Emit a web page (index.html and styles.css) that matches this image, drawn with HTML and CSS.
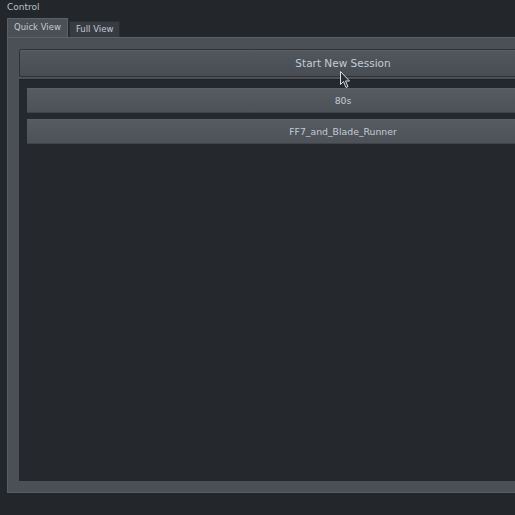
FILE: index.html
```html
<!DOCTYPE html>
<html>
<head>
<meta charset="utf-8">
<link rel="stylesheet" href="styles.css">
</head>
<body>
<div class="window">
  <div class="title">Control</div>
  <div class="tabs">
    <div class="tab active">Quick View</div>
    <div class="tab">Full View</div>
  </div>
  <div class="pane">
    <button class="start">Start New Session</button>
    <div class="list">
      <button class="item">80s</button>
      <button class="item">FF7_and_Blade_Runner</button>
    </div>
  </div>
</div>
<svg class="cursor" width="12" height="18" viewBox="0 0 12 18">
  <path d="M0.5 0.5 L0.5 13.5 L3.5 10.5 L6 16.5 L8 15.5 L5.5 10 L9.5 10 Z" fill="#2a2d31" stroke="#d8dde2" stroke-width="1"/>
</svg>
</body>
</html>
```

FILE: styles.css
```css
html, body {
  margin: 0;
  padding: 0;
  width: 515px;
  height: 515px;
  overflow: hidden;
  background: #23262b;
}
body {
  position: relative;
  font-family: "DejaVu Sans", "Noto Sans", sans-serif;
  color: #c4ccd4;
}
.window {
  width: 700px;
}
.title {
  font-size: 9px;
  line-height: 12px;
  padding: 1px 0 0 7px;
  height: 12px;
  color: #b8c2cc;
}
.tabs {
  display: flex;
  align-items: flex-end;
  margin: 6px 0 0 7px;
  height: 18px;
  gap: 1px;
}
.tab {
  font-size: 8.5px;
  height: 15px;
  line-height: 15px;
  padding: 0 6px;
  background: #383b41;
  border: 1px solid #2b2e33;
  border-bottom: none;
  color: #c4ccd4;
}
.tab.active {
  height: 18px;
  line-height: 17px;
  padding: 0 6px;
  background: #4b4f56;
  border-color: #5c6068;
  color: #c4ccd4;
}
.pane {
  width: 672px;
  height: 456px;
  margin-left: 7px;
  box-sizing: border-box;
  background: #4b4f56;
  border: 1px solid #585c63;
  border-top: 1px solid #5c6068;
  padding: 11px 11px 11px 11px;
  display: flex;
  flex-direction: column;
}
.start {
  margin: 0;
  height: 28px;
  flex: none;
  border: 1px solid #2e3135;
  border-radius: 2px;
  background: linear-gradient(#52565d, #484c53);
  color: #c4ccd4;
  font-family: "DejaVu Sans", "Noto Sans", sans-serif;
  font-size: 10.5px;
  padding: 0;
  box-shadow: inset 0 1px 0 #5a5e65;
}
.list {
  margin-top: 2px;
  flex: 1;
  background: #25282d;
  border-top: 1px solid #202226;
  padding: 8px 8px 0 8px;
  display: flex;
  flex-direction: column;
  gap: 6px;
}
.item {
  margin: 0;
  height: 25px;
  border: none;
  border-top: 1px solid #5b5f66;
  border-bottom: 1px solid #404349;
  background: linear-gradient(#565a61, #4d5158);
  color: #c4ccd4;
  font-family: "DejaVu Sans", "Noto Sans", sans-serif;
  font-size: 9.3px;
  padding: 0;
}
.cursor {
  position: absolute;
  left: 340px;
  top: 71px;
}
```
